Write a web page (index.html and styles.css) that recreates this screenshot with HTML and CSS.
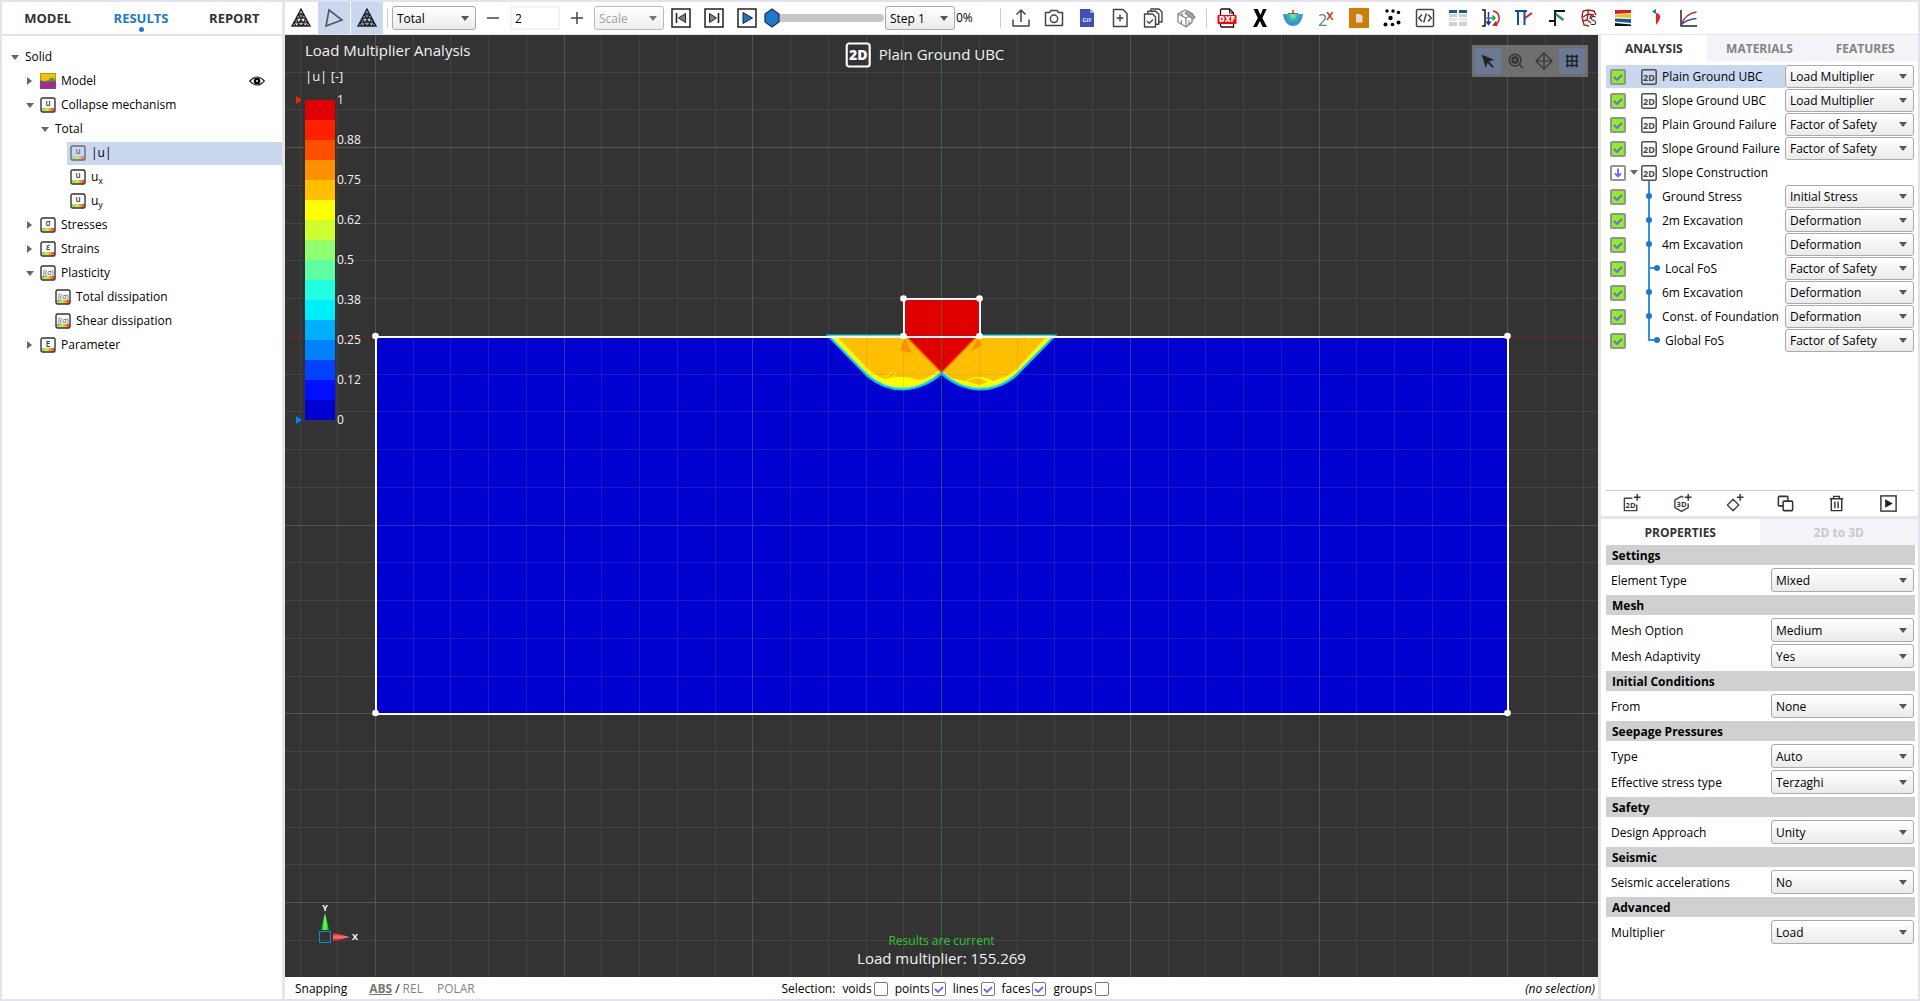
FILE: index.html
```html
<!DOCTYPE html>
<html lang="en">
<head>
<meta charset="utf-8">
<title>Plain Ground UBC - Results</title>
<link rel="stylesheet" href="styles.css">
</head>
<body>
<svg class="defs" aria-hidden="true">
  <defs>
    <linearGradient id="rainbow"><stop offset="0" stop-color="#6fe07a"/><stop offset=".45" stop-color="#e8e23c"/><stop offset="1" stop-color="#ff3a1e"/></linearGradient>
    <linearGradient id="coneY"><stop offset="0" stop-color="#0a0"/><stop offset=".5" stop-color="#6f6"/><stop offset="1" stop-color="#0b0"/></linearGradient>
    <linearGradient id="coneX" x2="0" y2="1"><stop offset="0" stop-color="#b00"/><stop offset=".5" stop-color="#f77"/><stop offset="1" stop-color="#c00"/></linearGradient>
    <symbol id="frame" viewBox="0 0 16 16"><path d="M1.500 11h13v3.500h-13z" fill="url(#rainbow)"/><rect x="1" y="1" width="14" height="14" rx="1.500" fill="none" stroke="#333" stroke-width="1.400"/></symbol>
    <symbol id="mesh" viewBox="0 0 20 20"><g fill="none" stroke="#222" stroke-width="1.300"><path d="M10 1L19 18H1zM7.300 6h5.400M5 10.200h10M3 14.200h14M7.300 6L13.600 18M5 10.200L9.200 18M3 14.200L5 18M12.700 6L6.400 18M15 10.200L10.800 18M17 14.200L15 18"/><path d="M1 18L10 6L19 18M4 14L10 18L16 14M10 1V18" stroke-width=".7"/></g></symbol>
    <symbol id="tag2d" viewBox="0 0 16 16"><rect x=".8" y=".8" width="14.400" height="14.400" rx="1.500" fill="none" stroke="#4d4d4d" stroke-width="1.500"/><text class="tag-text" x="8" y="11.500" text-anchor="middle">2D</text></symbol>
  </defs>
</svg>

<div class="app">
  <aside class="results">
    <nav class="main-tabs">
      <button class="main-tab">MODEL</button>
      <button class="main-tab active">RESULTS</button>
      <button class="main-tab">REPORT</button>
    </nav>
    <ul class="tree">
      <li><div class="node"><button class="twist open" aria-label="Collapse"></button><span class="item">Solid</span></div>
        <ul>
          <li><div class="node"><button class="twist" aria-label="Expand"></button><span class="item"><svg class="ico" viewBox="0 0 16 16"><path fill="#ffc000" d="M0 0h16v8H0z"/><path fill="#4ea72e" d="M0 7l5 1 3-1 4-3 4 3v4H0z"/><path fill="#a02b93" d="M0 8l6 1 10-1v8H0z"/><path d="M.5.500h15v15H.5z" fill="none" stroke="#666" stroke-opacity=".5"/></svg>Model</span><button class="eye" aria-label="Toggle model visibility"><svg width="16" height="10" viewBox="0 0 16 10"><path d="M.7 5Q8-3 15.300 5Q8 13 .7 5z" fill="#fff" stroke="#222" stroke-width="1.200"/><circle cx="8" cy="5" r="3.300"/><circle cx="8" cy="5" r="1" fill="#fff"/></svg></button></div></li>
          <li><div class="node"><button class="twist open" aria-label="Collapse"></button><span class="item"><svg class="ico" viewBox="0 0 16 16"><use href="#frame"/><text x="8" y="9" text-anchor="middle">u</text></svg>Collapse mechanism</span></div>
            <ul>
              <li><div class="node"><button class="twist open" aria-label="Collapse"></button><span class="item">Total</span></div>
                <ul>
                  <li><div class="node"><span class="item selected"><svg class="ico" viewBox="0 0 16 16"><use href="#frame"/><text x="8" y="9" text-anchor="middle">u</text></svg>|u|</span></div></li>
                  <li><div class="node"><span class="item"><svg class="ico" viewBox="0 0 16 16"><use href="#frame"/><text x="8" y="9" text-anchor="middle">u</text></svg><span>u<sub>x</sub></span></span></div></li>
                  <li><div class="node"><span class="item"><svg class="ico" viewBox="0 0 16 16"><use href="#frame"/><text x="8" y="9" text-anchor="middle">u</text></svg><span>u<sub>y</sub></span></span></div></li>
                </ul></li>
            </ul></li>
          <li><div class="node"><button class="twist" aria-label="Expand"></button><span class="item"><svg class="ico" viewBox="0 0 16 16"><use href="#frame"/><text x="8" y="9" text-anchor="middle">σ</text></svg>Stresses</span></div></li>
          <li><div class="node"><button class="twist" aria-label="Expand"></button><span class="item"><svg class="ico" viewBox="0 0 16 16"><use href="#frame"/><text x="8" y="9" text-anchor="middle">ε</text></svg>Strains</span></div></li>
          <li><div class="node"><button class="twist open" aria-label="Collapse"></button><span class="item"><svg class="ico" viewBox="0 0 16 16"><use href="#frame"/><text class="small" x="8" y="10" text-anchor="middle">∫(σ)</text></svg>Plasticity</span></div>
            <ul>
              <li><div class="node"><span class="item"><svg class="ico" viewBox="0 0 16 16"><use href="#frame"/><text class="small" x="8" y="10" text-anchor="middle">∫(σ)</text></svg>Total dissipation</span></div></li>
              <li><div class="node"><span class="item"><svg class="ico" viewBox="0 0 16 16"><use href="#frame"/><text class="small" x="8" y="10" text-anchor="middle">∫(σ)</text></svg>Shear dissipation</span></div></li>
            </ul></li>
          <li><div class="node"><button class="twist" aria-label="Expand"></button><span class="item"><svg class="ico" viewBox="0 0 16 16"><use href="#frame"/><text x="8" y="10" text-anchor="middle">E</text></svg>Parameter</span></div></li>
        </ul></li>
    </ul>
  </aside>
  <div class="splitter"></div>

  <div class="workspace">
    <div class="toolbar">
      <button class="tool" aria-label="Mesh"><svg viewBox="0 0 20 20"><use href="#mesh"/></svg></button>
      <button class="tool on" aria-label="Outline"><svg viewBox="0 0 20 20"><path d="M5 2L18 12L2 18z" fill="none" stroke="#555" stroke-width="1.600"/></svg></button>
      <button class="tool on" aria-label="Deformed mesh"><svg viewBox="0 0 20 20"><use href="#mesh"/></svg></button>
      <i class="sep"></i>
      <select class="w-total" aria-label="Result set"><option>Total</option></select>
      <button class="tool" aria-label="Decrease"><svg viewBox="0 0 20 20"><path d="M4 10h12" stroke="#444" stroke-width="1.500"/></svg></button>
      <input class="factor" type="text" value="2" aria-label="Scale factor">
      <button class="tool" aria-label="Increase"><svg viewBox="0 0 20 20"><path d="M4 10h12M10 4v12" stroke="#444" stroke-width="1.500"/></svg></button>
      <select class="w-scale" aria-label="Scale" disabled><option>Scale</option></select>
      <button class="tool" aria-label="Previous step"><svg viewBox="0 0 20 20"><rect x="1" y="1" width="18" height="18" fill="#fff" stroke="#222" stroke-width="1.500"/><path d="M5.500 5v10" stroke="#222" stroke-width="1.600"/><path d="M14.500 5.500v9L7.500 10z" fill="#7d8471" stroke="#222" stroke-linejoin="round"/></svg></button>
      <button class="tool" aria-label="Next step"><svg viewBox="0 0 20 20"><rect x="1" y="1" width="18" height="18" fill="#fff" stroke="#222" stroke-width="1.500"/><path d="M14.500 5v10" stroke="#222" stroke-width="1.600"/><path d="M5.500 5.500v9l7-4.500z" fill="#7d8471" stroke="#222" stroke-linejoin="round"/></svg></button>
      <button class="tool" aria-label="Play"><svg viewBox="0 0 20 20"><rect x="1" y="1" width="18" height="18" fill="#fff" stroke="#222" stroke-width="1.500"/><path d="M6 4.500v11l9.500-5.500z" fill="#1a78d0" stroke="#222" stroke-linejoin="round"/></svg></button>
      <input class="progress" type="range" min="0" max="100" value="0" aria-label="Step position">
      <select class="w-scale" aria-label="Step"><option>Step 1</option></select>
      <output class="percent">0%</output>
      <i class="sep"></i>
      <button class="tool" aria-label="Export"><svg viewBox="0 0 20 20" fill="none" stroke="#444" stroke-width="1.500"><path d="M2 11.500V18h16v-6.500M10 14V2M5.500 6.500L10 2l4.500 4.500" stroke-linejoin="round"/></svg></button>
      <button class="tool" aria-label="Screenshot"><svg viewBox="0 0 20 20" fill="none" stroke="#444" stroke-width="1.500"><path d="M1.500 4.500h4L7 2.500h6l1.500 2h4v13h-17z" stroke-linejoin="round"/><circle cx="10" cy="10.800" r="3.700"/></svg></button>
      <button class="tool" aria-label="Export GIF"><svg viewBox="0 0 20 20"><path d="M3 1h10l4 4v14H3z" fill="#3f51b5"/><path d="M13 1l4 4h-4z" fill="#9fa8da"/><text x="10" y="13.500" text-anchor="middle" font-size="6" font-weight="700" fill="#dfe3ff">GIF</text></svg></button>
      <button class="tool" aria-label="Add to report"><svg viewBox="0 0 20 20" fill="none" stroke="#444" stroke-width="1.500"><path d="M3.500 1.500h9.500l4 4v13H3.500z" stroke-linejoin="round"/><path d="M10 6.500v7M6.500 10h7"/></svg></button>
      <button class="tool" aria-label="Check all"><svg viewBox="0 0 20 20" fill="#fff" stroke="#444" stroke-width="1.400" stroke-linejoin="round"><path d="M8 1h8l3 3v10H8z"/><path d="M4.800 3.300h8l3 3v10h-11z"/><path d="M1.500 6h8l3 3v10h-11z"/><path d="M4 13l2.200 2.200L10 11.500" fill="none"/></svg></button>
      <button class="tool" aria-label="Section view"><svg viewBox="0 0 20 20" fill="#fff" stroke="#888" stroke-width="1.300" stroke-linejoin="round"><path d="M2 6l7-4 8 4-7 4zM2 6v8l8 5v-9zM10 10v9l6-4.500V6.500M6 8V3.800M5.500 12v4M13 12.500v4"/><path d="M9 5l3-2 7 6-2 2z" fill="#aaa"/></svg></button>
      <i class="sep"></i>
      <button class="tool" aria-label="Import DXF"><svg viewBox="0 0 20 20"><path d="M4.500 1h8l4 4v14h-12l-1-1V2z" fill="#fff" stroke="#111" stroke-width="1.300"/><path d="M12.500 1v4h4" fill="none" stroke="#111"/><rect x=".5" y="7" width="19" height="9" rx="1" fill="#f00"/><text x="10" y="14.300" text-anchor="middle" font-size="8" font-weight="800" fill="#fff">DXF</text></svg></button>
      <button class="tool" aria-label="X tool"><svg viewBox="0 0 20 20"><path d="M3.500 1h4.300L10.400 7 13 1h3.700l-4.300 9 4.600 9h-4.400L9.900 13l-3 6H3l4.800-9z" fill="#000"/></svg></button>
      <button class="tool" aria-label="Foundation tool"><svg viewBox="0 0 20 20"><path d="M0 6h20C19 14 15 18 10 18S1 14 0 6z" fill="#3f8fe0"/><path d="M3 6h14c-1 5-3 8-7 8s-6-3-7-8z" fill="#35b5b0"/><path d="M6 6h8c-1 3-2 5-4 5s-3-2-4-5z" fill="#6edb9b"/><path d="M5 5.500h10" stroke="#666"/><path d="M10 2v3" stroke="#e33" stroke-width="1.600"/></svg></button>
      <button class="tool" aria-label="Power tool"><svg viewBox="0 0 20 20"><text x="2" y="18" font-size="16" fill="#4a86a8">2</text><text x="10" y="12" font-size="14" font-weight="600" fill="#c0401c">x</text></svg></button>
      <button class="tool" aria-label="Clipboard"><svg viewBox="0 0 20 20"><path d="M0 0h20v20H0z" fill="#cf7d05"/><path d="M7 6h4l2.500 2v6.500H7z" fill="#ddd"/></svg></button>
      <button class="tool" aria-label="Points"><svg viewBox="0 0 20 20"><g fill="#000"><circle cx="5" cy="3" r="1.700"/><circle cx="11" cy="3" r="1.700"/><circle cx="16.500" cy="4.500" r="1.700"/><circle cx="8.500" cy="10" r="2.200"/><circle cx="3.500" cy="16.500" r="2"/><circle cx="10.500" cy="16.500" r="1.800"/><circle cx="16.500" cy="14.500" r="2"/></g></svg></button>
      <button class="tool" aria-label="Script"><svg viewBox="0 0 20 20" fill="none" stroke="#444" stroke-width="1.500"><rect x="1.500" y="1.500" width="17" height="17" rx="1"/><path d="M7 6.500L3.800 10 7 13.500M13 6.500l3.200 3.500-3.200 3.500M11.300 5.500l-2.600 9"/></svg></button>
      <button class="tool" aria-label="Table"><svg viewBox="0 0 20 20"><path d="M1 2h8v3H1zM11 2h8v3h-8z" fill="#156082"/><path d="M1 6h8v3H1zM11 6h8v3h-8zM1 14h8v4H1zM11 14h8v4h-8z" fill="#ccd2d6"/><path d="M1 10h8v3H1zM11 10h8v3h-8z" fill="#e6e9eb"/></svg></button>
      <button class="tool" aria-label="Wall loads"><svg viewBox="0 0 20 20" fill="none" stroke-width="1.500"><path d="M1 2h3v16H1" stroke="#111"/><path d="M7.500 4v12M5.500 13.500l2 3 2-3" stroke="#22c"/><path d="M4 10h10M11.500 7.500L14 10l-2.500 2.500" stroke="#2a9a4a"/><path d="M12 3c8 1 8 13 1 14M15.500 13.500L12.500 17l4 .5" stroke="#c4232f"/></svg></button>
      <button class="tool" aria-label="Pile"><svg viewBox="0 0 20 20" fill="none"><path d="M1 3h12M4 3v14M10.500 3v14" stroke="#0b4f9e" stroke-width="2"/><path d="M11 10L18 5" stroke="#c4232f" stroke-width="2"/></svg></button>
      <button class="tool" aria-label="Anchor"><svg viewBox="0 0 20 20" fill="none"><path d="M18 3H8V18M2 13h6" stroke="#111" stroke-width="1.900"/><path d="M8.500 6l8 6" stroke="#139a43" stroke-width="2.200"/></svg></button>
      <button class="tool" aria-label="Rock strength"><svg viewBox="0 0 20 20"><path d="M3 3l5-1 6 1 2 4M3 3L2 9l2 8 5 1M3 9l5-3 6 1M8 6V2M8 6l-1 6-4 1M7 12l4 3M11 6l-1 5" fill="none" stroke="#a02020" stroke-width="1.400"/><text x="10" y="17" font-size="12" fill="#222">S</text></svg></button>
      <button class="tool" aria-label="Layers"><svg viewBox="0 0 20 20"><path d="M2 2h16v3L2 6z" fill="#e31b1b"/><path d="M2 7l16-1v4L2 9z" fill="#ffc000"/><path d="M2 10.500l16 .5v4L2 13.500z" fill="#0f5f9c"/><path d="M2 15l16 1.500V18H2z" fill="#111"/></svg></button>
      <button class="tool" aria-label="Pressure diagram"><svg viewBox="0 0 20 20"><path d="M10 1v5L6 3.500z" fill="#0b7cd0"/><path d="M10 5c6 1 5 6 0 12z" fill="#f51b1b"/></svg></button>
      <button class="tool" aria-label="Curves"><svg viewBox="0 0 20 20" fill="none" stroke-width="1.500"><path d="M2 2v16h16" stroke="#222"/><path d="M2 17C5 9 10 5 17.500 4" stroke="#c4232f"/><path d="M2 17c4-4 9-6 15.500-6.500" stroke="#1565a8"/></svg></button>
    </div>

    <div class="content">
      <main class="view">
        <div class="canvas">
          <svg class="scene" viewBox="0 0 1313 942" preserveAspectRatio="xMidYMid slice">
            <path class="axis-x" d="M0 301.500h1313"/>
            <rect x="90" y="301" width="1132" height="377" fill="#0000d0"/>
            <g class="mechanism">
              <path d="M544 301L582 340Q599 354 618 354Q640 353 656.500 338Q673 353 694 354Q714 354 731 340L769 301z" fill="#ffff00" stroke="#00c8ff" stroke-width="3"/>
              <path d="M545 301L582.500 339Q599 353 618 353Q640 352 656.500 336Q673 352 694 353Q714 353 730.500 339L768 301z" fill="#ffff00" stroke="#7dff7d" stroke-width="1"/>
              <path d="M552 301L580 331Q590 341 600 344Q618 339 634 345L641 343L656.500 335L666 343L680 346Q694 338 708 346L722 341L733 333L762 301z" fill="#ffbf00"/>
              <path d="M681 346l12-3 10 4-9 3z" fill="#ffbf00"/>
              <path d="M620 303l-5 12 12 3zM693 303l-7 13 11-6z" fill="#ff9000"/>
              <path d="M601 342l6-5M608 342l3-4" stroke="#ff0"/>
              <path d="M621 301H692L656.500 337.500z" fill="#e00000" stroke="#ff5000" stroke-width="1.500"/>
              <rect x="618" y="264" width="76" height="38" fill="#e00000"/>
            </g>
            <path class="minor" d="M15.500 0v942M52.500 0v942M128.500 0v942M165.500 0v942M203.500 0v942M241.500 0v942M316.500 0v942M354.500 0v942M392.500 0v942M430.500 0v942M505.500 0v942M543.500 0v942M581.500 0v942M618.500 0v942M694.500 0v942M732.500 0v942M769.500 0v942M807.500 0v942M883.500 0v942M920.500 0v942M958.500 0v942M996.500 0v942M1071.500 0v942M1109.500 0v942M1147.500 0v942M1185.500 0v942M1260.500 0v942M1298.500 0v942M0 37.500h1313M0 74.500h1313M0 150.500h1313M0 188.500h1313M0 225.500h1313M0 263.500h1313M0 339.500h1313M0 376.500h1313M0 414.500h1313M0 452.500h1313M0 527.500h1313M0 565.500h1313M0 603.500h1313M0 641.500h1313M0 716.500h1313M0 754.500h1313M0 792.500h1313M0 829.500h1313M0 905.500h1313"/>
            <path class="major" d="M90.500 0v942M279.500 0v942M467.500 0v942M845.500 0v942M1034.500 0v942M1222.500 0v942M0 112.500h1313M0 490.500h1313M0 678.500h1313M0 867.500h1313"/>
            <path class="axis-y" d="M656.500 0v942"/>
            <path class="outline" d="M90.500 301.500H1222.500V678.500H90.500zM618.500 301.500V263.500H694.500V301.500"/>
            <g fill="#fff"><circle cx="90.500" cy="301" r="3.300"/><circle cx="1222.500" cy="301" r="3.300"/><circle cx="90.500" cy="678" r="3.300"/><circle cx="1222.500" cy="678" r="3.300"/><circle cx="618.500" cy="263.500" r="3.300"/><circle cx="694.500" cy="263.500" r="3.300"/><circle cx="618.500" cy="301" r="3.300"/><circle cx="694.500" cy="301" r="3.300"/></g>
          </svg>

          <div class="legend">
            <div class="legend-title">Load Multiplier Analysis</div>
            <div class="legend-unit">|u| [-]</div>
            <div class="scale">
              <div class="marks"><i class="mark high"></i><i class="mark low"></i></div>
              <div class="bands"></div>
              <ol class="ticks"><li>1</li><li>0.88</li><li>0.75</li><li>0.62</li><li>0.5</li><li>0.38</li><li>0.25</li><li>0.12</li><li>0</li></ol>
            </div>
          </div>

          <div class="heading"><svg width="26" height="26" viewBox="0 0 26 26"><rect x="1.500" y="1.500" width="23" height="23" rx="2.500" fill="none" stroke="#fff" stroke-width="2.200"/><text x="13" y="18" text-anchor="middle" font-size="14" font-weight="800" fill="#fff">2D</text></svg><span>Plain Ground UBC</span></div>

          <div class="view-tools">
            <button class="vt on" aria-label="Select"><svg viewBox="0 0 20 20"><path d="M3 3l14 5.500-6 2 5.500 5.500-1.500 1.500-5.500-5.500-2 5.500z" fill="#222"/></svg></button>
            <button class="vt" aria-label="Zoom"><svg viewBox="0 0 20 20" fill="none" stroke="#333" stroke-width="1.500"><circle cx="9" cy="9" r="6.500"/><circle cx="9" cy="9" r="3.500" fill="#333"/><path d="M14 14l4 4"/><path d="M7 8h4M7 10h4" stroke="#6f6f6f" stroke-width="1"/></svg></button>
            <button class="vt" aria-label="Pan"><svg viewBox="0 0 20 20" fill="none" stroke="#333" stroke-width="1.300"><path d="M10 1v18M1 10h18M10 1l-9 9 9 9 9-9z"/></svg></button>
            <button class="vt on" aria-label="Grid"><svg viewBox="0 0 20 20" fill="none" stroke="#222" stroke-width="1.600"><path d="M3 5h14M3 10h14M3 15h14M5 3v14M10 3v14M15 3v14"/></svg></button>
          </div>

          <svg class="triad" width="44" height="44" viewBox="0 0 44 44"><rect x="4.500" y="30.500" width="11" height="11" fill="none" stroke="#0a8fd0"/><path d="M10 12l4 17H6z" fill="url(#coneY)"/><path d="M35 36l-17 4.500v-9z" fill="url(#coneX)"/><text x="10" y="10" text-anchor="middle">Y</text><text x="40" y="39" text-anchor="middle">X</text></svg>

          <div class="status-text"><div class="current">Results are current</div><div class="result">Load multiplier: 155.269</div></div>
        </div>

        <footer class="statusbar">
          <div class="snap"><button class="txt snapping">Snapping</button><button class="txt abs">ABS</button><span class="slash">/</span><button class="txt dim">REL</button><button class="txt dim polar">POLAR</button></div>
          <div class="selection"><span>Selection:</span>
            <label>voids<input type="checkbox" class="tick"></label>
            <label>points<input type="checkbox" class="tick" checked></label>
            <label>lines<input type="checkbox" class="tick" checked></label>
            <label>faces<input type="checkbox" class="tick" checked></label>
            <label>groups<input type="checkbox" class="tick"></label>
          </div>
          <em class="none">(no selection)</em>
        </footer>
      </main>
      <div class="splitter"></div>

      <aside class="inspector">
        <section class="pane">
          <nav class="tabs"><button class="tab active">ANALYSIS</button><button class="tab">MATERIALS</button><button class="tab">FEATURES</button></nav>
          <ul class="analyses">
            <li><div class="entry selected"><input type="checkbox" class="run" id="a1" checked><svg class="ico tag" viewBox="0 0 16 16"><use href="#tag2d"/></svg><label for="a1">Plain Ground UBC</label></div><select aria-label="Plain Ground UBC type"><option>Load Multiplier</option></select></li>
            <li><div class="entry"><input type="checkbox" class="run" id="a2" checked><svg class="ico tag" viewBox="0 0 16 16"><use href="#tag2d"/></svg><label for="a2">Slope Ground UBC</label></div><select aria-label="Slope Ground UBC type"><option>Load Multiplier</option></select></li>
            <li><div class="entry"><input type="checkbox" class="run" id="a3" checked><svg class="ico tag" viewBox="0 0 16 16"><use href="#tag2d"/></svg><label for="a3">Plain Ground Failure</label></div><select aria-label="Plain Ground Failure type"><option>Factor of Safety</option></select></li>
            <li><div class="entry"><input type="checkbox" class="run" id="a4" checked><svg class="ico tag" viewBox="0 0 16 16"><use href="#tag2d"/></svg><label for="a4">Slope Ground Failure</label></div><select aria-label="Slope Ground Failure type"><option>Factor of Safety</option></select></li>
            <li><div class="entry"><button class="down" aria-label="Run stages"><svg width="12" height="12" viewBox="0 0 12 12"><path d="M6 1.500v8M3 6.500l3 3 3-3" fill="none" stroke="#7a5cff" stroke-width="1.800"/></svg></button><button class="twist open" aria-label="Collapse"></button><svg class="ico" viewBox="0 0 16 16"><use href="#tag2d"/></svg><span>Slope Construction</span></div></li>
            <li><div class="entry"><input type="checkbox" class="run" id="a5" checked><svg class="rail" viewBox="0 0 16 24"><path d="M8-4v28"/><circle cx="8" cy="11" r="3"/></svg><label for="a5">Ground Stress</label></div><select aria-label="Ground Stress type"><option>Initial Stress</option></select></li>
            <li><div class="entry"><input type="checkbox" class="run" id="a6" checked><svg class="rail" viewBox="0 0 16 24"><path d="M8 0v24"/><circle cx="8" cy="11" r="3"/></svg><label for="a6">2m Excavation</label></div><select aria-label="2m Excavation type"><option>Deformation</option></select></li>
            <li><div class="entry"><input type="checkbox" class="run" id="a7" checked><svg class="rail" viewBox="0 0 16 24"><path d="M8 0v24"/><circle cx="8" cy="11" r="3"/></svg><label for="a7">4m Excavation</label></div><select aria-label="4m Excavation type"><option>Deformation</option></select></li>
            <li><div class="entry branch"><input type="checkbox" class="run" id="a8" checked><svg class="rail" viewBox="0 0 16 24"><path d="M8 0v24M8 11h8"/><circle cx="16" cy="11" r="3"/></svg><label for="a8">Local FoS</label></div><select aria-label="Local FoS type"><option>Factor of Safety</option></select></li>
            <li><div class="entry"><input type="checkbox" class="run" id="a9" checked><svg class="rail" viewBox="0 0 16 24"><path d="M8 0v24"/><circle cx="8" cy="11" r="3"/></svg><label for="a9">6m Excavation</label></div><select aria-label="6m Excavation type"><option>Deformation</option></select></li>
            <li><div class="entry"><input type="checkbox" class="run" id="a10" checked><svg class="rail" viewBox="0 0 16 24"><path d="M8 0v24"/><circle cx="8" cy="11" r="3"/></svg><label for="a10">Const. of Foundation</label></div><select aria-label="Const. of Foundation type"><option>Deformation</option></select></li>
            <li><div class="entry branch"><input type="checkbox" class="run" id="a11" checked><svg class="rail" viewBox="0 0 16 24"><path d="M8 0v11h8"/><circle cx="16" cy="11" r="3"/></svg><label for="a11">Global FoS</label></div><select aria-label="Global FoS type"><option>Factor of Safety</option></select></li>
          </ul>
          <div class="actions">
            <button aria-label="Add 2D analysis"><svg viewBox="0 0 20 20"><path d="M11 4.500H2.500v13h13V11" fill="none" stroke="#444" stroke-width="1.500"/><path d="M16 0v7M12.500 3.500h7" stroke="#333" stroke-width="1.500"/><text x="9" y="14.500" text-anchor="middle">2D</text></svg></button>
            <button aria-label="Add 3D analysis"><svg viewBox="0 0 20 20"><path d="M11 3.500L9 2.500 2 6.300v8l7 4 7-4V10" fill="none" stroke="#444" stroke-width="1.500"/><path d="M16 0v7M12.500 3.500h7" stroke="#333" stroke-width="1.500"/><text x="9" y="13.500" text-anchor="middle">3D</text></svg></button>
            <button aria-label="Add stage"><svg viewBox="0 0 20 20"><path d="M8.500 5.500l6 6-6 6-6-6z" fill="none" stroke="#444" stroke-width="1.500" stroke-linejoin="round"/><path d="M16 0v7M12.500 3.500h7" stroke="#333" stroke-width="1.500"/></svg></button>
            <button aria-label="Duplicate"><svg viewBox="0 0 20 20" fill="#fff" stroke="#333" stroke-width="1.600"><rect x="2.500" y="2.500" width="10" height="10" rx="1"/><rect x="7.500" y="7.500" width="10" height="10" rx="1"/></svg></button>
            <button aria-label="Delete"><svg viewBox="0 0 20 20" fill="none" stroke="#333" stroke-width="1.500"><path d="M3 5h14M7 5V2.500h6V5M4.500 5v12.500h11V5M8.300 8v7M11.700 8v7"/></svg></button>
            <button aria-label="Run"><svg viewBox="0 0 20 20"><rect x="2" y="2" width="16" height="16" fill="#fff" stroke="#333" stroke-width="1.500"/><path d="M6.500 5.500v9l8-4.500z" fill="#222"/></svg></button>
          </div>
        </section>
        <div class="hsplit"></div>
        <section class="pane">
          <nav class="tabs"><button class="tab active">PROPERTIES</button><button class="tab" disabled>2D to 3D</button></nav>
          <form class="props">
            <h3>Settings</h3>
            <div class="group"><label for="p1">Element Type</label><select id="p1"><option>Mixed</option></select></div>
            <h3>Mesh</h3>
            <div class="group"><label for="p2">Mesh Option</label><select id="p2"><option>Medium</option></select><label for="p3">Mesh Adaptivity</label><select id="p3"><option>Yes</option></select></div>
            <h3>Initial Conditions</h3>
            <div class="group"><label for="p4">From</label><select id="p4"><option>None</option></select></div>
            <h3>Seepage Pressures</h3>
            <div class="group"><label for="p5">Type</label><select id="p5"><option>Auto</option></select><label for="p6">Effective stress type</label><select id="p6"><option>Terzaghi</option></select></div>
            <h3>Safety</h3>
            <div class="group"><label for="p7">Design Approach</label><select id="p7"><option>Unity</option></select></div>
            <h3>Seismic</h3>
            <div class="group"><label for="p8">Seismic accelerations</label><select id="p8"><option>No</option></select></div>
            <h3>Advanced</h3>
            <div class="group"><label for="p9">Multiplier</label><select id="p9"><option>Load</option></select></div>
          </form>
        </section>
      </aside>
    </div>
  </div>
</div>
</body>
</html>
```
FILE: styles.css
```css
:root {
  --edge: #e2e1ee;
  --split: #e6e6e6;
  --pick: #c9d8ee;
  --blue: #1a78d0;
}
* { box-sizing: border-box; }
body {
  margin: 0;
  background: #fff;
  color: #000;
  font-family: "Open Sans", "Noto Sans", sans-serif;
  font-size: 12px;
  line-height: 16px;
}
button, input, select { font: inherit; color: inherit; }
button { border: 0; padding: 0; margin: 0; background: none; cursor: pointer; }
ul, ol { list-style: none; margin: 0; padding: 0; }
svg { display: block; flex: none; }
.defs { position: absolute; width: 0; height: 0; }

.app { display: flex; min-height: 100vh; border: 2px solid var(--edge); }
.splitter { flex: none; width: 3px; background: var(--split); }

/* Drop-downs */
select {
  appearance: none;
  height: 24px;
  padding: 1px 24px 0 4px;
  border: 1px solid #aaa;
  border-radius: 3px;
  background: url("data:image/svg+xml,%3Csvg xmlns='http://www.w3.org/2000/svg' width='8' height='5'%3E%3Cpath d='M0 0h8L4 5z' fill='%23555'/%3E%3C/svg%3E") right 6px center no-repeat, linear-gradient(#fff, #ebebeb);
}
select:disabled { color: #888; opacity: .8; }

/* Results panel */
.results { flex: none; width: 280px; }
.main-tabs { display: grid; grid-template-columns: repeat(3, 1fr); height: 34px; border-bottom: 2px solid var(--edge); }
.main-tab { position: relative; padding-right: 2px; font-size: 13px; font-weight: 700; color: #333; }
.main-tab.active { color: var(--blue); }
.main-tab.active::after { content: ""; position: absolute; left: 50%; bottom: 2px; width: 5px; height: 5px; margin-left: -3px; border-radius: 50%; background: var(--blue); }
.tree { padding: 9px 0 0 6px; }
.tree ul { padding-left: 15px; }
.node { display: flex; align-items: center; height: 24px; padding-left: 14px; }
.node .twist { margin-left: -14px; }
.twist { flex: none; width: 13px; height: 16px; margin-right: 1px; display: flex; align-items: center; justify-content: center; }
.twist::before { content: ""; border: 4px solid transparent; border-left: 5px solid #666; border-right: 0; }
.twist.open::before { border: 4px solid transparent; border-top: 5px solid #666; border-bottom: 0; }
.item { display: flex; align-items: center; flex: 1; gap: 5px; height: 23px; padding-left: 3px; }
.item.selected { background: var(--pick); }
.item.selected .ico { opacity: .65; }
.item sub { font-size: 9px; line-height: 0; vertical-align: -3px; }
.ico { width: 16px; height: 16px; }
.ico text { font-size: 8px; font-weight: 600; fill: #333; }
.ico .small { font-size: 7px; font-weight: 400; }
.tag-text { font-size: 9px; font-weight: 700; fill: #444; }
.eye { margin-right: 17px; }

/* Toolbar */
.workspace { flex: 1; min-width: 0; display: flex; flex-direction: column; }
.toolbar { display: flex; align-items: center; gap: 1px; height: 33px; border-bottom: 1px solid var(--edge); overflow: hidden; }
.tool { flex: none; display: flex; align-items: center; justify-content: center; width: 32px; height: 32px; }
.tool svg { width: 20px; height: 20px; overflow: visible; }
.tool.on { background: var(--pick); }
.sep { flex: none; width: 1px; height: 20px; margin: 0 3px; background: #ccc; }
.toolbar select { flex: none; }
.w-total { width: 84px; }
.w-scale { width: 70px; }
.factor { width: 50px; height: 24px; padding: 0 3px; border: 2px solid #f3f2f9; }
.percent { width: 40px; }
.progress { appearance: none; width: 120px; height: 20px; margin: 0; background: none; }
.progress::-webkit-slider-runnable-track { height: 8px; border-radius: 4px; background: #c8c6c8; }
.progress::-webkit-slider-thumb {
  appearance: none;
  width: 16px;
  height: 20px;
  margin-top: -6px;
  background: url("data:image/svg+xml,%3Csvg xmlns='http://www.w3.org/2000/svg' width='16' height='20'%3E%3Cpath d='M8 1l7 5v8l-7 5-7-5V6z' fill='%231a78d0' stroke='%23234' stroke-width='1.200'/%3E%3C/svg%3E");
}

/* Viewport */
.content { flex: 1; display: flex; min-height: 0; }
.view { flex: 1; min-width: 0; display: flex; flex-direction: column; }
.canvas { position: relative; flex: 1; overflow: hidden; background: #333; color: #f2f2f2; }
.scene { position: absolute; inset: 0; width: 100%; height: 100%; }
.minor, .major, .axis-x, .axis-y, .outline { fill: none; shape-rendering: crispEdges; }
.minor { stroke: #808080; stroke-opacity: .2; }
.major { stroke: #909090; stroke-opacity: .35; }
.axis-x { stroke: #702020; }
.axis-y { stroke: #2c9a35; stroke-opacity: .5; }
.outline { stroke: #fff; stroke-width: 2; }
.legend { position: absolute; left: 11px; top: 4px; }
.legend-title { padding-left: 9px; font-size: 15px; line-height: 22px; }
.legend-unit { padding: 4px 0 0 9px; font-size: 13px; line-height: 22px; }
.scale { display: flex; margin-top: 13px; }
.marks { display: flex; flex-direction: column; justify-content: space-between; width: 9px; height: 328px; margin: -4px 0; }
.mark { width: 0; border: 4px solid transparent; border-left: 6px solid #ff2000; border-right: 0; }
.mark.low { border-left-color: #0080ff; }
.bands {
  width: 30px;
  height: 320px;
  background: linear-gradient(#e00000 0 20px, #ff2000 0 40px, #ff5000 0 60px, #ff9000 0 80px, #ffbf00 0 100px, #ffff00 0 120px, #cfff30 0 140px, #90ff70 0 160px, #60ffa0 0 180px, #20ffdf 0 200px, #00efff 0 220px, #00afff 0 240px, #0080ff 0 260px, #0040ff 0 280px, #0010ff 0 300px, #0000d0 0);
}
.ticks { margin: -20px 0 -20px 2px; line-height: 40px; }
.ticks li { height: 40px; }
.heading { position: absolute; top: 7px; left: 50%; display: flex; align-items: center; gap: 8px; transform: translateX(-50%); margin-left: -17px; font-size: 15px; white-space: nowrap; }
.heading span { line-height: 22px; padding-bottom: 2px; }
.view-tools { position: absolute; top: 10px; right: 10px; display: flex; gap: 2px; padding: 3px; background: #6f6f6f; }
.vt { display: flex; align-items: center; justify-content: center; width: 26px; height: 26px; }
.vt svg { width: 18px; height: 18px; }
.vt.on { background: #6b7a94; }
.triad { position: absolute; left: 30px; bottom: 32px; }
.triad text { font-size: 9px; font-weight: 700; fill: #fff; }
.status-text { position: absolute; left: 0; right: 0; bottom: 9px; text-align: center; }
.current { color: #2fc72f; font-size: 12px; line-height: 15px; }
.result { font-size: 15px; line-height: 20px; }

/* Status bar */
.statusbar { display: grid; grid-template-columns: 1fr auto 1fr; align-items: center; height: 22px; padding: 2px 3px 0 10px; }
.snap { display: flex; }
.snapping { margin-right: 22px; }
.abs { font-weight: 700; text-decoration: underline; color: #77776c; }
.slash { margin: 0 3px; }
.dim { color: #85857b; }
.polar { margin-left: 14px; }
.selection { display: flex; align-items: center; gap: 7px; }
.selection label { display: flex; align-items: center; gap: 2px; }
.none { text-align: right; }
.tick, .run { appearance: none; flex: none; margin: 0; background: #fff center no-repeat; }
.tick { width: 14px; height: 14px; border: 1px solid #777; border-radius: 2px; }
.tick:checked, .run:checked { background-image: url("data:image/svg+xml,%3Csvg xmlns='http://www.w3.org/2000/svg' width='12' height='12'%3E%3Cpath d='M2 6l3 3 5-5' fill='none' stroke='%237a5cff' stroke-width='1.800'/%3E%3C/svg%3E"); }
.run { width: 16px; height: 16px; border: 2px solid #949494; border-radius: 2px; }
.run:checked { background-color: #8cf01e; }

/* Inspector */
.inspector { flex: none; width: 317px; display: grid; grid-template-rows: 481fr 3px 480fr; }
.pane { display: flex; flex-direction: column; min-height: 0; }
.hsplit { background: var(--split); }
.tabs { display: flex; height: 26px; }
.tab { flex: 1; padding-top: 2px; background: #f4f3f9; font-weight: 700; color: #85857b; }
.tab.active { background: #fff; color: #333; }
.tab:disabled { color: #c8c8c8; cursor: default; }
.analyses { flex: 1; padding: 4px 4px 0 5px; }
.analyses li { display: grid; grid-template-columns: 1fr 129px; height: 24px; }
.analyses select { height: 23px; }
.entry { display: flex; align-items: center; height: 23px; padding-left: 4px; white-space: nowrap; }
.entry.selected { background: var(--pick); }
.entry .ico, .rail { margin-right: 5px; }
.entry .tag, .rail { margin-left: 15px; }
.rail { width: 16px; height: 24px; overflow: visible; fill: var(--blue); }
.rail path { fill: none; stroke: #3f8fd8; stroke-width: 2; }
.branch .rail { margin-right: 8px; }
.down { display: flex; align-items: center; justify-content: center; width: 16px; height: 16px; border: 2px solid #949494; border-radius: 2px; background: #fff; }
.entry .twist { margin-left: 1px; }
.actions { display: grid; grid-template-columns: repeat(6, 1fr); height: 26px; margin: 0 4px 0 5px; border-top: 1px solid #ccc; }
.actions button { display: flex; align-items: center; justify-content: center; }
.actions svg { width: 19px; height: 19px; }
.actions text { font-size: 8px; font-weight: 700; fill: #333; }
.props { padding: 0 3px 0 5px; }
.props h3 { margin: 0; padding: 1px 0 0 6px; background: #d0d0d0; font-size: 12px; font-weight: 700; line-height: 19px; }
.group { display: grid; grid-template-columns: 1fr 143px; gap: 2px 0; align-items: center; padding: 3px 1px 3px 5px; }
.group label { padding-top: 1px; }
```
